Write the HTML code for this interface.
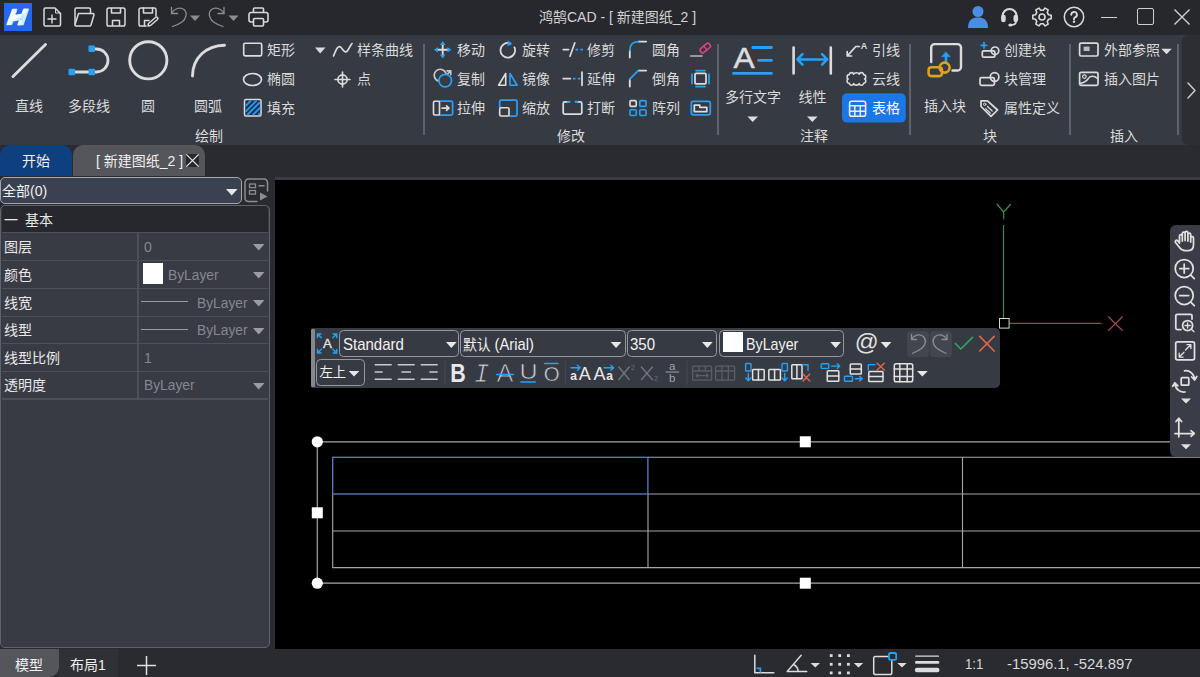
<!DOCTYPE html>
<html lang="zh">
<head>
<meta charset="utf-8">
<title>鸿鹄CAD</title>
<style>
*{box-sizing:border-box;margin:0;padding:0}
html,body{width:1200px;height:677px;overflow:hidden;background:#000}
body{position:relative;font-family:"Liberation Sans","Noto Sans CJK SC",sans-serif;font-size:14px;color:#e6e6e6}
.abs{position:absolute}
#titlebar{position:absolute;left:0;top:0;width:1200px;height:35px;background:#27282d}
#ribbon{position:absolute;left:0;top:35px;width:1200px;height:110px;background:#363a43}
#tabstrip{position:absolute;left:0;top:145px;width:1200px;height:35px;background:#2a2b30}
#left{position:absolute;left:0;top:176px;width:275px;height:473px;background:#2a2b30}
#canvas{position:absolute;left:275px;top:180px;width:925px;height:469px;background:#000}
#status{position:absolute;left:0;top:649px;width:1200px;height:28px;background:#2a2b30}
.t{position:absolute;white-space:nowrap;line-height:20px}
#ribbon .t{color:#dadada}
svg{position:absolute;overflow:visible}
.cb{border:1.5px solid #96989e;border-radius:4.500px;background:#363a43}
</style>
</head>
<body>
<div id="titlebar">
<!-- logo -->
<div class="abs" style="left:4px;top:3px;width:27.500px;height:27.700px;background:#2468f2"></div>
<svg style="left:0;top:0" width="36" height="35" viewBox="0 0 36 35"><defs><linearGradient id="lg" x1="0" y1="0" x2="1" y2="0.600"><stop offset="0" stop-color="#ffffff"/><stop offset="0.550" stop-color="#f4fbff"/><stop offset="1" stop-color="#a9daf8"/></linearGradient></defs><g fill="url(#lg)" stroke="url(#lg)" stroke-width="1.600" stroke-linejoin="round"><path d="M12.800 9.600 L16.600 9.600 L11.600 24.200 L7.200 24.400 Z"/><path d="M24 9.400 L28.200 9.200 L23 24.400 L18.200 24.600 Z"/><path d="M13.200 15.600 C17 15.800 19 14.400 23.600 14.400 L22 19.400 C18 19.400 16 20.600 11.600 20.400 Z"/></g></svg>
<!-- new -->
<svg style="left:43px;top:7px" width="19" height="20" viewBox="0 0 19 20" fill="none" stroke="#d9d9d9" stroke-width="1.5" stroke-linejoin="round" stroke-linecap="round"><path d="M2.5 1 H12 L17.5 6.5 V17.5 A1.5 1.5 0 0 1 16 19 H2.5 A1.5 1.5 0 0 1 1 17.5 V2.5 A1.5 1.5 0 0 1 2.5 1 Z"/><path d="M12.5 2 V6 H17" stroke-width="1"/><path d="M9 8 V16 M5 12 H13" stroke-width="1.400"/></svg>
<!-- open -->
<svg style="left:74px;top:7px" width="21" height="20" viewBox="0 0 21 20" fill="none" stroke="#d9d9d9" stroke-width="1.5" stroke-linejoin="round" stroke-linecap="round"><path d="M1 17 V2.5 A1.5 1.5 0 0 1 2.5 1 H15 A1.5 1.5 0 0 1 16.5 2.5 V6.5"/><path d="M4.5 6.5 H19 A1 1 0 0 1 20 7.8 L17 18 A1.5 1.5 0 0 1 15.5 19 H2 A1 1 0 0 1 1 17.7 Z"/></svg>
<!-- save -->
<svg style="left:106px;top:7px" width="20" height="20" viewBox="0 0 20 20" fill="none" stroke="#d9d9d9" stroke-width="1.5" stroke-linejoin="round"><rect x="1" y="1" width="18" height="18" rx="1.8"/><path d="M5.5 1 V6 H14.5 V1"/><path d="M6.5 19 V13.5 H13.5 V19"/></svg>
<!-- save as -->
<svg style="left:138px;top:7px" width="21" height="20" viewBox="0 0 21 20" fill="none" stroke="#d9d9d9" stroke-width="1.5" stroke-linejoin="round" stroke-linecap="round"><path d="M8 19 H2.8 A1.8 1.8 0 0 1 1 17.2 V2.8 A1.8 1.8 0 0 1 2.8 1 H16.2 A1.8 1.8 0 0 1 18 2.8 V9"/><path d="M5.5 1 V6 H14.5 V1"/><path d="M6.5 19 V13.5 H11"/><path d="M10.5 16.5 L17.5 10.5 A1.2 1.2 0 0 1 19.5 12.5 L12.5 18.5 L10 19 Z"/></svg>
<!-- undo -->
<svg style="left:169px;top:6px" width="34" height="22" viewBox="0 0 34 22" fill="none" stroke="#8c8d90" stroke-width="1.3" stroke-linejoin="round" stroke-linecap="round"><path d="M2.5 1.5 V7.5 H8.5"/><path d="M2.5 7.5 C5 2.5 11 0.5 15 3.5 C19 7 17 13 13 16 C10 18.2 6.5 19.5 3.5 20.5"/><path d="M21 9.5 H31 L26 15 Z" fill="#8c8d90" stroke="none"/></svg>
<!-- redo -->
<svg style="left:208px;top:6px" width="34" height="22" viewBox="0 0 34 22" fill="none" stroke="#8c8d90" stroke-width="1.3" stroke-linejoin="round" stroke-linecap="round"><path d="M16 1.5 V7.5 H10"/><path d="M16 7.5 C13.5 2.5 7.5 0.5 3.5 3.5 C-0.5 7 1.5 13 5.5 16 C8.5 18.2 12 19.5 15 20.5"/><path d="M20.5 9.5 H30.5 L25.5 15 Z" fill="#8c8d90" stroke="none"/></svg>
<!-- print -->
<svg style="left:248px;top:7px" width="21" height="20" viewBox="0 0 21 20" fill="none" stroke="#d9d9d9" stroke-width="1.6" stroke-linejoin="round"><path d="M5.5 5.5 V2 A1 1 0 0 1 6.5 1 H14.5 A1 1 0 0 1 15.5 2 V5.5"/><path d="M5.5 15 H3 A2 2 0 0 1 1 13 V7.5 A2 2 0 0 1 3 5.5 H18 A2 2 0 0 1 20 7.5 V13 A2 2 0 0 1 18 15 H15.5"/><rect x="5.5" y="11.5" width="10" height="7.5" rx="1"/></svg>
<div class="t" style="left:539px;top:7px;font-size:14px;color:#d4d4d4">鸿鹄CAD - [ 新建图纸_2 ]</div>
<!-- user -->
<svg style="left:967px;top:5px" width="22" height="23" viewBox="0 0 22 23"><circle cx="11" cy="6.5" r="5.5" fill="#4a8de4"/><path d="M1 23 C1 15 5 12.5 11 12.5 C17 12.5 21 15 21 23 Z" fill="#4a8de4"/></svg>
<!-- headset -->
<svg style="left:1000px;top:7px" width="19" height="20" viewBox="0 0 19 20" fill="none" stroke="#d9d9d9" stroke-width="2.100" stroke-linecap="round"><path d="M2.600 10.500 V9 A7 7 0 0 1 16.600 9 V10.500"/><rect x="1.100" y="7.800" width="4.600" height="7.400" rx="2.200" fill="#d9d9d9" stroke="none"/><rect x="13.500" y="7.800" width="4.600" height="7.400" rx="2.200" fill="#d9d9d9" stroke="none"/><path d="M16.200 14 C16.200 16.800 14 18 11 18" stroke-width="1.700"/><ellipse cx="10.400" cy="17.900" rx="2.100" ry="1.500" fill="#d9d9d9" stroke="none"/></svg>
<!-- gear -->
<svg style="left:1032.200px;top:6.900px" width="20" height="20" viewBox="0 0 20 20" fill="none" stroke="#d9d9d9" stroke-width="1.600" stroke-linejoin="round"><path d="M16.52 7.75 L19.23 8.21 L19.23 11.79 L16.52 12.25 L15.21 14.53 L16.17 17.09 L13.06 18.89 L11.32 16.77 L8.68 16.77 L6.94 18.89 L3.83 17.09 L4.79 14.53 L3.48 12.25 L0.77 11.79 L0.77 8.21 L3.48 7.75 L4.79 5.47 L3.83 2.91 L6.94 1.11 L8.68 3.23 L11.32 3.23 L13.06 1.11 L16.17 2.91 L15.21 5.47 Z"/><circle cx="10" cy="10" r="3"/></svg>
<!-- help -->
<svg style="left:1063px;top:6px" width="22" height="22" viewBox="0 0 22 22" fill="none" stroke="#d9d9d9" stroke-width="1.5" stroke-linecap="round"><circle cx="11" cy="11" r="9.7"/><path d="M8.300 8.800 A2.800 2.800 0 1 1 11.900 11.400 C11.200 11.700 11 12.200 11 13.200" stroke-width="1.900"/><circle cx="11" cy="15.800" r="1.200" fill="#d9d9d9" stroke="none"/></svg>
<!-- window controls -->
<div class="abs" style="left:1101px;top:16.700px;width:16px;height:1.300px;background:#d0d0d0"></div>
<div class="abs" style="left:1137px;top:8px;width:17px;height:17px;border:1.500px solid #d0d0d0;border-radius:2px"></div>
<svg style="left:1174px;top:9px" width="16" height="16" viewBox="0 0 17 17" stroke="#d0d0d0" stroke-width="1.450"><path d="M0.5 0.5 L16.5 16.5 M16.5 0.5 L0.5 16.5"/></svg>
</div>
<div id="ribbon">
<!-- ===== draw ===== -->
<svg style="left:0;top:0" width="420" height="110" viewBox="0 35 420 110" fill="none" stroke-linecap="round">
<path d="M13 76.5 L45.5 44.5" stroke="#dcdcdc" stroke-width="2.900"/>
<path d="M71.5 72 H96.5 A11.5 11.5 0 0 0 96.5 49 H92" stroke="#dcdcdc" stroke-width="2.800"/>
<rect x="88.5" y="45.5" width="6.5" height="6.5" rx="1" fill="#27a0f5"/><rect x="68.5" y="68.7" width="6.5" height="6.5" rx="1" fill="#27a0f5"/><rect x="88.5" y="68.7" width="6.5" height="6.5" rx="1" fill="#27a0f5"/>
<circle cx="148.300" cy="60.300" r="18.600" stroke="#dcdcdc" stroke-width="2.900"/>
<path d="M192.5 76 C192.5 58 206 45.5 224.5 45.200" stroke="#dcdcdc" stroke-width="2.900"/>
<!-- rect -->
<rect x="243.7" y="43.2" width="18" height="12.6" rx="1.5" stroke="#dcdcdc" stroke-width="1.65"/>
<ellipse cx="252.5" cy="79.5" rx="9" ry="6" stroke="#dcdcdc" stroke-width="1.65"/>
<rect x="244.5" y="99.5" width="16.5" height="16.5" rx="1.5" fill="#1c2f4a" stroke="#dcdcdc" stroke-width="1.5"/>
<path d="M245.6 106 L251 100.6 M245.6 111.6 L256.5 100.6 M247.2 115 L260 102.2 M252.8 115 L260 107.8 M258.2 115 L260 113.2" stroke="#2a96ea" stroke-width="2" stroke-linecap="butt"/>
<path d="M315 47.5 H325.5 L320.2 53.5 Z" fill="#dcdcdc"/>
<path d="M333.5 56 C336 50 338 44.5 341 47.5 C344 51 345.5 54 348 50 C349.5 47.5 350.5 45.5 352 43.5" stroke="#dcdcdc" stroke-width="1.65"/>
<circle cx="342.5" cy="79.5" r="4.6" stroke="#dcdcdc" stroke-width="1.65"/><path d="M335 79.5 H350 M342.5 72 V87" stroke="#dcdcdc" stroke-width="1.65"/>
</svg>
<div class="t" style="left:15px;top:61px">直线</div>
<div class="t" style="left:68px;top:61px">多段线</div>
<div class="t" style="left:141px;top:61px">圆</div>
<div class="t" style="left:194px;top:61px">圆弧</div>
<div class="t" style="left:267px;top:5px">矩形</div>
<div class="t" style="left:267px;top:34px">椭圆</div>
<div class="t" style="left:267px;top:63px">填充</div>
<div class="t" style="left:357px;top:5px">样条曲线</div>
<div class="t" style="left:357px;top:34px">点</div>
<div class="t" style="left:195px;top:91px">绘制</div>
<!-- ===== modify ===== -->
<div class="abs" style="left:423px;top:9px;width:1.500px;height:91px;background:#5f636d"></div>
<svg style="left:420px;top:0" width="300" height="110" viewBox="420 35 300 110" fill="none" stroke-linecap="round" stroke-linejoin="round">
<!-- move -->
<path d="M442.7 44.5 V55 M437.5 49.7 H448" stroke="#dcdcdc" stroke-width="1.85"/>
<path d="M442.7 41 L445.5 45 H439.9 Z M442.7 58.4 L445.5 54.4 H439.9 Z M433.9 49.7 L438 46.9 V52.5 Z M451.5 49.7 L447.4 46.9 V52.5 Z" fill="#27a0f5"/>
<!-- copy -->
<path d="M438.5 81 A6 6 0 1 1 446 73.5" stroke="#c8c8c8" stroke-width="1.65"/>
<path d="M447 70.8 H450.8 V74.6 M450.8 70.8 L447.5 74" stroke="#c8c8c8" stroke-width="1.65"/>
<circle cx="445.2" cy="80.6" r="6.3" stroke="#27a0f5" stroke-width="1.75"/>
<!-- stretch -->
<path d="M439.5 101.2 H451 A1.6 1.6 0 0 1 452.6 102.8 V113.4 A1.6 1.6 0 0 1 451 115 H439.5" stroke="#27a0f5" stroke-width="1.75"/>
<rect x="433.5" y="101.2" width="6" height="13.8" rx="1.2" stroke="#dcdcdc" stroke-width="1.65"/>
<path d="M442 108.1 H448.5 M446.5 105.8 L449 108.1 L446.5 110.4" stroke="#dcdcdc" stroke-width="1.65"/>
<!-- rotate -->
<path d="M513 45.2 A7.3 7.3 0 1 1 507.7 43" stroke="#dcdcdc" stroke-width="1.75" transform="rotate(20 507.7 50.3)" />
<path d="M507.5 40.5 L512.5 43.5 L508 46.5 Z" fill="#27a0f5" transform="rotate(8 509 43)"/>
<!-- mirror -->
<path d="M505.7 73.5 V85.2 H498.6 Z" stroke="#dcdcdc" stroke-width="1.65"/>
<path d="M510 73.5 V85.2 H517.1 Z" stroke="#27a0f5" stroke-width="1.65"/>
<!-- scale -->
<path d="M499.7 107 V101.6 A1.6 1.6 0 0 1 501.3 100 H515.4 A1.6 1.6 0 0 1 517 101.6 V114.4 A1.6 1.6 0 0 1 515.4 116 H509.5" stroke="#27a0f5" stroke-width="1.75"/>
<rect x="499.7" y="107.7" width="9.3" height="8.3" rx="1.2" stroke="#dcdcdc" stroke-width="1.65"/>
<!-- trim -->
<path d="M563.2 49.6 H568.6 M570 56.2 L574.8 42.9" stroke="#dcdcdc" stroke-width="1.65"/>
<path d="M575.5 49.6 H583" stroke="#27a0f5" stroke-width="1.65" stroke-dasharray="2.6 2.2" stroke-linecap="butt"/>
<!-- extend -->
<path d="M563.2 78.6 H570.5 M582 72 V85.3" stroke="#dcdcdc" stroke-width="1.75"/>
<path d="M573 78.6 H580.5" stroke="#27a0f5" stroke-width="1.65" stroke-dasharray="2.6 2.2" stroke-linecap="butt"/>
<!-- break -->
<path d="M568.5 101.8 H564.8 A1.6 1.6 0 0 0 563.2 103.4 V112.6 A1.6 1.6 0 0 0 564.8 114.2 H580.2 A1.6 1.6 0 0 0 581.8 112.6 V103.4 A1.6 1.6 0 0 0 580.2 101.8 H576.5" stroke="#dcdcdc" stroke-width="1.75"/>
<path d="M568 101.8 H569.6 M575.6 101.8 H577.2" stroke="#27a0f5" stroke-width="2.2"/>
<!-- fillet -->
<path d="M629.8 57.5 V50.5 M638.2 41.6 H646.2" stroke="#dcdcdc" stroke-width="1.85"/>
<path d="M629.8 50.3 C629.8 45 633 41.6 638.2 41.6" stroke="#27a0f5" stroke-width="1.85"/>
<!-- chamfer -->
<path d="M629.8 86.5 V79.2 M638.2 70.6 H646.2" stroke="#dcdcdc" stroke-width="1.85"/>
<path d="M629.8 79.2 L638.2 70.6" stroke="#27a0f5" stroke-width="1.85"/>
<!-- array -->
<rect x="630" y="100.6" width="6.2" height="5.8" rx="1" stroke="#dcdcdc" stroke-width="1.65"/>
<rect x="639.8" y="100.6" width="6.2" height="5.8" rx="1" stroke="#27a0f5" stroke-width="1.65"/>
<rect x="630" y="109.7" width="6.2" height="5.8" rx="1" stroke="#27a0f5" stroke-width="1.65"/>
<rect x="639.8" y="109.7" width="6.2" height="5.8" rx="1" stroke="#27a0f5" stroke-width="1.65"/>
<!-- erase -->
<path d="M690.8 56 H702" stroke="#b8b8b8" stroke-width="1.65"/>
<rect x="699.5" y="45.6" width="11.5" height="5" rx="1.5" stroke="#e0457b" stroke-width="1.55" transform="rotate(-40 705.2 48.1)"/>
<path d="M703.8 46.2 L707 50" stroke="#e0457b" stroke-width="1.2" transform="rotate(0)"/>
<!-- offset -->
<rect x="695" y="73.4" width="11" height="10.4" rx="1" stroke="#dcdcdc" stroke-width="1.75"/>
<path d="M692 74 V83.5 M709 74 V83.5 M696 70.5 H705 M696 86.7 H705" stroke="#27a0f5" stroke-width="1.75"/>
<!-- folder -->
<rect x="691.3" y="101.4" width="19" height="13.4" rx="2" stroke="#27a0f5" stroke-width="1.75"/>
<path d="M694.3 111.7 V105.2 H699.8 V107.3 H706.8 V111.7 Z" stroke="#dcdcdc" stroke-width="1.75"/>
</svg>
<div class="t" style="left:457px;top:5px">移动</div>
<div class="t" style="left:457px;top:34px">复制</div>
<div class="t" style="left:457px;top:63px">拉伸</div>
<div class="t" style="left:522px;top:5px">旋转</div>
<div class="t" style="left:522px;top:34px">镜像</div>
<div class="t" style="left:522px;top:63px">缩放</div>
<div class="t" style="left:587px;top:5px">修剪</div>
<div class="t" style="left:587px;top:34px">延伸</div>
<div class="t" style="left:587px;top:63px">打断</div>
<div class="t" style="left:652px;top:5px">圆角</div>
<div class="t" style="left:652px;top:34px">倒角</div>
<div class="t" style="left:652px;top:63px">阵列</div>
<div class="t" style="left:557px;top:91px">修改</div>
<div class="abs" style="left:717px;top:9px;width:1.500px;height:91px;background:#5f636d"></div>
<!-- ===== annotate ===== -->
<svg style="left:720px;top:0" width="480" height="110" viewBox="720 35 480 110" fill="none" stroke-linecap="round" stroke-linejoin="round">
<!-- mtext -->
<text x="733.6" y="68.4" font-family="Liberation Sans, sans-serif" font-size="29" fill="#dcdcdc" stroke="#dcdcdc" stroke-width="0.5" textLength="21.2" lengthAdjust="spacingAndGlyphs">A</text>
<path d="M752.8 47.5 H771.5 M758.5 60.4 H771.5 M733.5 73.4 H771.5" stroke="#27a0f5" stroke-width="2.8"/>
<!-- linear -->
<path d="M793.6 47.5 V73.5 M830.8 47.5 V73.5" stroke="#dcdcdc" stroke-width="2.6"/>
<path d="M797.5 59.4 H827 M802.5 54.200 L797.3 59.4 L802.5 64.600 M822 54.200 L827.2 59.4 L822 64.600" stroke="#27a0f5" stroke-width="2.500"/>
<path d="M747.5 116.5 H758 L752.7 122 Z M807 116.5 H817.6 L812.3 122 Z" fill="#dcdcdc"/>
<!-- leader -->
<path d="M847.6 55.6 L855.8 46.5 H859.3 M847.2 51.6 V56 H851.6" stroke="#dcdcdc" stroke-width="1.7"/>
<text x="860.8" y="49.2" font-family="Liberation Sans, sans-serif" font-weight="bold" font-size="9" fill="#dcdcdc">A</text>
<!-- cloud -->
<path d="M849.2 74.6 C849.5 72 853.2 72 853.6 74.2 C854.6 72.2 858.4 72.2 859.2 74.2 C859.8 72 863.4 72 863.6 74.6 C866.3 74.6 866.3 78.6 864.6 79 C866.3 79.4 866.3 83.2 863.6 83.2 C863.4 85.8 859.8 85.8 859.2 83.6 C858.4 85.6 854.6 85.6 853.6 83.6 C853.2 85.8 849.500 85.8 849.2 83.2 C846.500 83.2 846.500 79.4 848.2 79 C846.500 78.6 846.500 74.600 849.2 74.600 Z" stroke="#dcdcdc" stroke-width="1.6"/>
<!-- table btn -->
<rect x="842" y="93.2" width="63.8" height="29.4" rx="5" fill="#1b76e6"/>
<rect x="849.6" y="101.2" width="16" height="15" rx="2" stroke="#ececec" stroke-width="1.6"/>
<path d="M849.6 105.800 H865.6 M849.6 111.2 H865.6 M854.800 105.800 V116.200 M860.3 105.800 V116.200" stroke="#ececec" stroke-width="1.5"/>
<!-- insert block -->
<path d="M931.2 62 V47.600 A3.500 3.500 0 0 1 934.700 44.100 H957.500 A3.500 3.500 0 0 1 961 47.600 V67 A3.500 3.500 0 0 1 957.500 70.500 H952.500" stroke="#dcdcdc" stroke-width="2.400"/>
<path d="M946 61.500 V55" stroke="#27a0f5" stroke-width="2.600"/><path d="M946 52 L950.200 56.800 H941.800 Z" fill="#27a0f5" stroke="#27a0f5" stroke-width="0.6"/>
<rect x="928.600" y="67.300" width="13.400" height="8.800" rx="2.800" stroke="#dba21c" stroke-width="2.600"/>
<circle cx="944.600" cy="67.600" r="5" stroke="#dba21c" stroke-width="2.600"/>
<!-- create block -->
<path d="M984 42.6 V48 M981.3 45.3 H986.7" stroke="#27a0f5" stroke-width="1.700"/>
<rect x="982.300" y="50.800" width="12.600" height="6.400" rx="1.500" stroke="#dcdcdc" stroke-width="1.700"/>
<circle cx="995" cy="50.800" r="3.800" stroke="#dcdcdc" stroke-width="1.700"/>
<!-- block mgr -->
<rect x="980" y="77.600" width="14.400" height="7.800" rx="1.600" stroke="#dcdcdc" stroke-width="1.700"/>
<circle cx="994.600" cy="77" r="4.300" stroke="#dcdcdc" stroke-width="1.700"/>
<!-- attr def -->
<path d="M981 100.8 H987.5 L997.6 110 L991 116.4 L981 106.5 Z" stroke="#dcdcdc" stroke-width="1.700"/>
<circle cx="984.7" cy="104.3" r="1.2" stroke="#dcdcdc" stroke-width="1"/>
<path d="M987.5 106.5 L992.2 111 M985.6 108.6 L990.2 113" stroke="#dcdcdc" stroke-width="1.2"/>
<!-- xref -->
<rect x="1079.6" y="43.2" width="18.4" height="12.8" rx="1.5" stroke="#dcdcdc" stroke-width="1.700"/>
<rect x="1083.6" y="46.6" width="6" height="4.4" fill="#b9bbbf"/>
<path d="M1161.3 48.8 H1171.8 L1166.5 54.3 Z" fill="#dcdcdc"/>
<!-- image -->
<rect x="1079.6" y="72.3" width="18.4" height="13" rx="1.5" stroke="#dcdcdc" stroke-width="1.700"/>
<circle cx="1084.4" cy="76.6" r="1.8" stroke="#dcdcdc" stroke-width="1.2"/>
<path d="M1080 83.5 C1084 82.5 1086 82 1088 79 C1090 75.5 1094 75.5 1097.5 78.5" stroke="#dcdcdc" stroke-width="1.500"/>
</svg>
<div class="t" style="left:725px;top:52px">多行文字</div>
<div class="t" style="left:798.500px;top:52px">线性</div>
<div class="t" style="left:800px;top:91px">注释</div>
<div class="t" style="left:872px;top:5px">引线</div>
<div class="t" style="left:872px;top:34px">云线</div>
<div class="t" style="left:872px;top:63px;color:#fff">表格</div>
<div class="abs" style="left:909px;top:9px;width:1.500px;height:91px;background:#5f636d"></div>
<div class="t" style="left:924px;top:61px">插入块</div>
<div class="t" style="left:1004px;top:5px">创建块</div>
<div class="t" style="left:1004px;top:34px">块管理</div>
<div class="t" style="left:1004px;top:63px">属性定义</div>
<div class="t" style="left:983px;top:91px">块</div>
<div class="abs" style="left:1069px;top:9px;width:1.500px;height:91px;background:#5f636d"></div>
<div class="t" style="left:1104px;top:5px">外部参照</div>
<div class="t" style="left:1104px;top:34px">插入图片</div>
<div class="t" style="left:1110px;top:91px">插入</div>
<div class="abs" style="left:1177px;top:9px;width:1.500px;height:91px;background:#5f636d"></div>
<div class="abs" style="left:1182px;top:0;width:18px;height:110px;background:#2c2e34;border-top-left-radius:6px;border-bottom-left-radius:6px"></div>
<svg style="left:1187px;top:47px" width="9" height="17" viewBox="0 0 9 17" fill="none" stroke="#d0d0d0" stroke-width="1.4" stroke-linecap="round" stroke-linejoin="round"><path d="M1 1 L8 8.5 L1 16"/></svg>

</div>
<div id="tabstrip">
<div class="abs" style="left:0;top:0;width:72px;height:31px;background:#0e3f7e;border-radius:10px 10px 0 0"></div>
<div class="t" style="left:22px;top:6px;color:#f0f0f0">开始</div>
<div class="abs" style="left:73px;top:0;width:132px;height:31px;background:#54565c;border-radius:10px 10px 0 0"></div>
<div class="t" style="left:96px;top:6px;color:#f0f0f0">[ 新建图纸_2 ]</div>
<svg style="left:186.200px;top:9.100px" width="13" height="13" viewBox="0 0 13 13" fill="none" stroke="#ececec" stroke-width="1.200"><rect x="0" y="0" width="13" height="13" fill="#27282d" stroke="none"/><path d="M0.300 0.300 L12.700 12.700 M12.700 0.300 L0.300 12.700"/></svg>
<div class="abs" style="left:275px;top:32px;width:925px;height:3px;background:#3a3c42"></div>
</div>
<div id="left">
<div class="abs" style="left:0;top:1px;width:242px;height:27px;background:#3a4252;border:1.5px solid #a3a5ab;border-radius:5px"></div>
<div class="t" style="left:2px;top:5px;color:#f0f0f0">全部(0)</div>
<svg style="left:226px;top:13px" width="12" height="7" viewBox="0 0 12 7"><path d="M0 0 H11.5 L5.75 6.5 Z" fill="#e8e8e8"/></svg>
<svg style="left:244px;top:2px" width="25" height="25" viewBox="0 0 25 25" fill="none" stroke="#8b8d93" stroke-width="1.5" stroke-linecap="round"><path d="M13 23.5 H4.5 A3.5 3.5 0 0 1 1 20 V4.500 A3.5 3.5 0 0 1 4.500 1 H20 A3.5 3.5 0 0 1 23.5 4.500 V13"/><rect x="5.5" y="6" width="6" height="3.6" stroke-width="1.3"/><rect x="5.500" y="12.5" width="6" height="3.6" stroke-width="1.3"/><path d="M15 7.800 H20"/><path d="M16 14.500 L23.500 18.500 L16 22.500 Z" fill="#8b8d93" stroke="none"/></svg>
<div class="abs" style="left:0;top:28.500px;width:269.500px;height:443.500px;background:#383b44;border:1.5px solid #60636c;border-radius:5px"></div>
<div class="abs" style="left:1.5px;top:30px;width:266.500px;height:26.500px;background:#27282d;border-radius:4px 4px 0 0"></div>
<div class="t" style="left:4px;top:34px;color:#e8e8e8">一</div><div class="t" style="left:25px;top:34px;color:#e8e8e8">基本</div>
<div class="abs" style="left:1.5px;top:56px;width:266.5px;height:28px;border-top:1.5px solid #4d5059"></div>
<div class="t" style="left:4px;top:60.5px;color:#e8e8e8">图层</div>
<div class="abs" style="left:1.5px;top:84px;width:266.5px;height:28px;border-top:1.5px solid #4d5059"></div>
<div class="t" style="left:4px;top:88.5px;color:#e8e8e8">颜色</div>
<div class="abs" style="left:1.5px;top:112px;width:266.5px;height:27.5px;border-top:1.5px solid #4d5059"></div>
<div class="t" style="left:4px;top:116.5px;color:#e8e8e8">线宽</div>
<div class="abs" style="left:1.5px;top:139.5px;width:266.5px;height:27.5px;border-top:1.5px solid #4d5059"></div>
<div class="t" style="left:4px;top:144.0px;color:#e8e8e8">线型</div>
<div class="abs" style="left:1.5px;top:167px;width:266.5px;height:27.5px;border-top:1.5px solid #4d5059"></div>
<div class="t" style="left:4px;top:171.5px;color:#e8e8e8">线型比例</div>
<div class="abs" style="left:1.5px;top:194.5px;width:266.5px;height:27.5px;border-top:1.5px solid #4d5059"></div>
<div class="t" style="left:4px;top:199.0px;color:#e8e8e8">透明度</div>
<div class="abs" style="left:1.5px;top:222px;width:266.5px;height:1.5px;background:#4d5059"></div>
<div class="abs" style="left:137px;top:56px;width:1.5px;height:167px;background:#4d5059"></div>
<div class="t" style="left:144px;top:60.5px;color:#85878d">0</div>
<svg style="left:253px;top:68px" width="12" height="7" viewBox="0 0 12 7"><path d="M0 0 H11.5 L5.75 6.5 Z" fill="#9a9ca2"/></svg>
<div class="abs" style="left:143px;top:87px;width:20px;height:21px;background:#fff"></div><div class="t" style="left:168px;top:88.5px;color:#85878d;font-size:15.300px;transform:scaleX(0.900);transform-origin:0 50%">ByLayer</div>
<svg style="left:253px;top:96px" width="12" height="7" viewBox="0 0 12 7"><path d="M0 0 H11.5 L5.75 6.5 Z" fill="#9a9ca2"/></svg>
<div class="abs" style="left:141px;top:125px;width:47px;height:1.3px;background:#9a9ca2"></div><div class="t" style="left:197px;top:116.5px;color:#85878d;font-size:15.300px;transform:scaleX(0.900);transform-origin:0 50%">ByLayer</div>
<svg style="left:253px;top:124px" width="12" height="7" viewBox="0 0 12 7"><path d="M0 0 H11.5 L5.75 6.5 Z" fill="#9a9ca2"/></svg>
<div class="abs" style="left:141px;top:152.5px;width:47px;height:1.3px;background:#9a9ca2"></div><div class="t" style="left:197px;top:144.0px;color:#85878d;font-size:15.300px;transform:scaleX(0.900);transform-origin:0 50%">ByLayer</div>
<svg style="left:253px;top:151.5px" width="12" height="7" viewBox="0 0 12 7"><path d="M0 0 H11.5 L5.75 6.5 Z" fill="#9a9ca2"/></svg>
<div class="t" style="left:144px;top:171.5px;color:#85878d">1</div>
<div class="t" style="left:144px;top:199.0px;color:#85878d;font-size:15.300px;transform:scaleX(0.900);transform-origin:0 50%">ByLayer</div>
<svg style="left:253px;top:206.5px" width="12" height="7" viewBox="0 0 12 7"><path d="M0 0 H11.5 L5.75 6.5 Z" fill="#9a9ca2"/></svg>

</div>
<div id="canvas">
<svg style="left:0;top:0" width="925" height="469" viewBox="275 180 925 469" fill="none">
<!-- UCS -->
<path d="M1003.5 225 V318" stroke="#3f8c48" stroke-width="1.2"/>
<path d="M996.8 204 L1003.7 212 L1010.8 204 M1003.7 212 V219.300" stroke="#3f8c48" stroke-width="1.2"/>
<path d="M1009.5 323.300 H1101.500" stroke="#9a4a4a" stroke-width="1.2"/>
<path d="M1108.2 316.500 L1122.700 330.700 M1122.700 316.500 L1108.200 330.700" stroke="#9a4a4a" stroke-width="1.2"/>
<rect x="999.5" y="318.500" width="9.6" height="9.6" stroke="#d8d8d8" stroke-width="1"/>
<!-- table frame -->
<path d="M317.300 441.800 H1200 M317.300 583.200 H1200 M317.300 441.800 V583.200" stroke="#a6a6a6" stroke-width="1.2"/>
<path d="M332.700 494 V567.600 H1200 M332.700 531 H1200 M648 494 H1200 M962.500 457.300 V567.600 M648 494 V567.600 M648 457.300 H1200" stroke="#a6a6a6" stroke-width="1.1"/>
<rect x="332.700" y="457.300" width="315.200" height="36.700" stroke="#5a7fc4" stroke-width="1.3"/>
<circle cx="317.300" cy="441.800" r="5.600" fill="#fff"/><circle cx="317.300" cy="583.200" r="5.600" fill="#fff"/>
<rect x="311.800" y="507.300" width="11" height="11" fill="#fff"/>
<rect x="799.800" y="436.300" width="11" height="11" fill="#fff"/>
<rect x="799.800" y="577.700" width="11" height="11" fill="#fff"/>
</svg>
<div class="abs" style="left:36px;top:148px;width:688.500px;height:59.500px;background:#363a43;border-radius:2px 5px 5px 2px"></div>
<div class="abs" style="left:36px;top:148.500px;width:3.500px;height:58px;background:#85878c;border-radius:1px"></div>
<div class="abs cb" style="left:64.300px;top:150.200px;width:120px;height:27px"></div>
<div class="abs cb" style="left:185.300px;top:150.200px;width:165.700px;height:27px"></div>
<div class="abs cb" style="left:352px;top:150.200px;width:90.300px;height:27px"></div>
<div class="abs cb" style="left:444.300px;top:150.200px;width:125px;height:27px"></div>
<div class="abs cb" style="left:41.200px;top:179.200px;width:48.800px;height:27px"></div>
<div class="t" style="left:68px;top:154.500px;font-size:15.700px;color:#f2f2f2;transform:scaleX(0.956);transform-origin:0 50%">Standard</div>
<div class="t" style="left:187.500px;top:154.500px;font-size:15.700px;color:#f2f2f2;transform:scaleX(0.940);transform-origin:0 50%"><span style="font-size:14.650px">默认</span> (Arial)</div>
<div class="t" style="left:355px;top:154.500px;font-size:15.700px;color:#f2f2f2;transform:scaleX(0.956);transform-origin:0 50%">350</div>
<div class="abs" style="left:447.500px;top:152.300px;width:20px;height:19.700px;background:#fff"></div>
<div class="t" style="left:471px;top:154.500px;font-size:15.700px;color:#f2f2f2;transform:scaleX(0.909);transform-origin:0 50%">ByLayer</div>
<div class="t" style="left:44.500px;top:183px;font-size:13.500px;color:#f2f2f2;letter-spacing:-0.5px">左上</div>
<div class="abs" style="left:631.500px;top:150.500px;width:22.500px;height:26.500px;background:#43464e;border-radius:4px"></div>
<div class="abs" style="left:654.500px;top:150.500px;width:22.500px;height:26.500px;background:#43464e;border-radius:4px"></div>
<svg style="left:36px;top:148px" width="689" height="59" viewBox="311 328 689 59" fill="none" stroke-linecap="round" stroke-linejoin="round">
<g fill="#e8e8e8"><path d="M446 342 H456.700 L451.350 348 Z"/><path d="M610.700 342 H621.400 L616.050 348 Z"/><path d="M702 342 H712.700 L707.350 348 Z"/><path d="M830.300 342 H841 L835.650 348 Z"/><path d="M880.700 342 H891.400 L886.050 348 Z"/><path d="M348.700 371 H359.400 L354.050 376.500 Z"/><path d="M917 371 H927.700 L922.350 376.500 Z"/></g>
<!-- text fit icon -->
<g stroke="#27a0f5" stroke-width="1.500"><path d="M317.500 337.500 V334 H321 M317.800 334.300 L321.300 337.800"/><path d="M336.700 337.500 V334 H333.200 M336.400 334.300 L332.900 337.800"/><path d="M317.500 349.500 V353 H321 M317.800 352.700 L321.300 349.200"/><path d="M336.700 349.500 V353 H333.200 M336.400 352.700 L332.900 349.200"/></g>
<text x="327.400" y="347.800" font-family="Liberation Sans, sans-serif" font-size="13.300" fill="#e8e8e8" stroke="#e8e8e8" stroke-width="0.300" text-anchor="middle">A</text>
<!-- align icons -->
<g stroke="#c9c9c9" stroke-width="1.500" stroke-linecap="butt"><path d="M374.700 364.700 H391.700 M374.700 372 H382.700 M374.700 379.200 H391.700"/><path d="M397.700 364.700 H414.700 M401.400 372 H411 M397.700 379.200 H414.700"/><path d="M420.700 364.700 H437.700 M429.400 372 H437.700 M420.700 379.200 H437.700"/></g>
<path d="M445 361 V385 M565.300 361 V385 M687 361 V385" stroke="#464952" stroke-width="1"/>
<!-- BIUO -->
<text x="450.300" y="381.700" font-family="Liberation Sans, sans-serif" font-weight="bold" font-size="25.500" fill="#e8e8e8" textLength="15.500" lengthAdjust="spacingAndGlyphs">B</text>
<text x="0" y="0" font-family="Liberation Mono, monospace" font-style="italic" font-size="27.500" fill="#d4d4d4" stroke="#363a43" stroke-width="0.900" id="ital" transform="translate(473.700 381.800) scale(0.950 1)">I</text>
<text x="496.500" y="382" font-family="Liberation Sans, sans-serif" font-size="25.500" fill="#d4d4d4" stroke="#363a43" stroke-width="0.900" textLength="17" lengthAdjust="spacingAndGlyphs" id="astrike">A</text>
<path d="M496.700 374.600 H513.400" stroke="#27a0f5" stroke-width="1.500"/>
<text x="0" y="0" font-family="Liberation Sans, sans-serif" font-size="21.800" fill="#d4d4d4" stroke="#363a43" stroke-width="0.600" id="uu" transform="translate(519.500 378.600) scale(1.150 1)">U</text>
<path d="M521 382 H535.300" stroke="#27a0f5" stroke-width="1.500"/>
<text x="0" y="0" font-family="Liberation Sans, sans-serif" font-size="20.800" fill="#d4d4d4" stroke="#363a43" stroke-width="0.500" id="oo" transform="translate(543.800 381.200) scale(0.985 1)">O</text>
<path d="M544.500 363.500 H558" stroke="#27a0f5" stroke-width="1.500"/>
<!-- case icons -->
<g stroke="#27a0f5" stroke-width="1.400"><path d="M571 367.700 H580 M577.300 365.200 L580.200 367.700 L577.300 370.200"/><path d="M604 367.700 H613.500 M610.800 365.200 L613.700 367.700 L610.800 370.200"/></g>
<text x="570.300" y="379.800" font-family="Liberation Sans, sans-serif" font-weight="bold" font-size="12" fill="#e8e8e8">a</text>
<text x="578.800" y="379.800" font-family="Liberation Sans, sans-serif" font-size="18" fill="#e8e8e8">A</text>
<text x="593.500" y="379.800" font-family="Liberation Sans, sans-serif" font-size="18" fill="#e8e8e8">A</text>
<text x="606.200" y="379.800" font-family="Liberation Sans, sans-serif" font-weight="bold" font-size="12" fill="#e8e8e8">a</text>
<!-- super/sub -->
<g stroke="#74777e" stroke-width="1.400"><path d="M618.800 367 L629.200 379.600 M629.200 367 L618.800 379.600"/><path d="M641.400 367 L652.400 379.600 M652.400 367 L641.400 379.600"/></g>
<text x="631" y="369.800" font-family="Liberation Sans, sans-serif" font-size="7" fill="#6b6e75">2</text>
<text x="654" y="380.800" font-family="Liberation Sans, sans-serif" font-size="7" fill="#6b6e75">2</text>
<text x="672.300" y="369.800" font-family="Liberation Sans, sans-serif" font-size="11.500" fill="#a0a2a8" text-anchor="middle">a</text>
<text x="672.300" y="382" font-family="Liberation Sans, sans-serif" font-size="11.500" fill="#a0a2a8" text-anchor="middle">b</text>
<path d="M666 372 H678.700" stroke="#a0a2a8" stroke-width="1.200"/>
<!-- merge icons (disabled) -->
<g stroke="#5b5e66" stroke-width="1.300"><rect x="692.600" y="366.200" width="19" height="14" rx="1"/><path d="M692.600 371 H711.600 M699 366.200 V371 M705.300 366.200 V371 M696 375.700 H708.300 M697.800 374 L696 375.700 L697.800 377.400 M706.500 374 L708.300 375.700 L706.500 377.400"/>
<rect x="715.600" y="366.200" width="19" height="14" rx="1"/><path d="M715.600 371 H734.600 M722 366.200 V380.200 M728.300 366.200 V380.200"/></g>
<!-- insert col left -->
<g stroke="#27a0f5" stroke-width="1.400"><rect x="745.600" y="363.500" width="5.400" height="7.500" rx="0.800"/><path d="M748.300 373.500 V380.500 M745.800 378 L748.300 380.700 L750.800 378"/>
<rect x="782" y="363.500" width="5.400" height="7.500" rx="0.800"/><path d="M784.700 373.500 V380.500 M782.200 378 L784.700 380.700 L787.200 378"/></g>
<g stroke="#e2e2e2" stroke-width="1.500"><rect x="752.600" y="369.500" width="11.600" height="10.500" rx="0.800"/><path d="M758.400 369.500 V380"/><rect x="768.800" y="369.500" width="11.600" height="10.500" rx="0.800"/><path d="M774.600 369.500 V380"/>
<rect x="791.800" y="364.800" width="10.200" height="14" rx="0.800"/><path d="M796.900 364.800 V378.800"/></g>
<path d="M802.500 364.800 H808 V370.500" stroke="#27a0f5" stroke-width="1.400"/>
<path d="M803 374 L809.800 381 M809.800 374 L803 381" stroke="#e0664a" stroke-width="1.400"/>
<!-- insert row above -->
<g stroke="#27a0f5" stroke-width="1.400"><rect x="821.200" y="363.800" width="7.600" height="4.600" rx="0.800"/><path d="M831.500 366.100 H839.500 M837.200 363.800 L839.700 366.100 L837.200 368.400"/>
<rect x="844.500" y="376.300" width="8" height="5" rx="0.800"/><path d="M855.300 378.800 H862 M859.700 376.500 L862.200 378.800 L859.700 381.100"/></g>
<g stroke="#e2e2e2" stroke-width="1.500"><rect x="827.300" y="370.800" width="11.500" height="10.500" rx="0.800"/><path d="M827.300 376 H838.800"/>
<rect x="850.300" y="364" width="11" height="10" rx="0.800"/><path d="M850.300 369 H861.300"/>
<rect x="868.800" y="371.500" width="14.200" height="10" rx="0.800"/><path d="M868.800 376.500 H883"/></g>
<path d="M875 364.600 H868.300 V370" stroke="#27a0f5" stroke-width="1.400"/>
<path d="M877 363.200 L884.300 370 M884.300 363.200 L877 370" stroke="#e0664a" stroke-width="1.400"/>
<!-- grid -->
<g stroke="#e2e2e2" stroke-width="1.500"><rect x="894.300" y="363.700" width="18.400" height="18" rx="1.800"/><path d="M894.300 369 H912.700 M894.300 376.500 H912.700 M899.800 363.700 V381.700 M907.200 363.700 V381.700"/></g>
<!-- @ -->
<text x="854.800" y="349.800" font-family="Liberation Sans, sans-serif" font-size="23.600" fill="#e0e0e0" id="at">@</text>
<!-- undo/redo -->
<g stroke="#8a8d93" stroke-width="1.300"><path d="M911.500 334.500 V339.500 H916.500"/><path d="M911.700 339.300 C914 335 919.500 333.500 923.300 336.500 C927 340 925.500 345 922 348 C919 350.500 915.500 352 912.500 353.300"/>
<path d="M947 334.500 V339.500 H942"/><path d="M946.800 339.300 C944.500 335 939 333.500 935.200 336.500 C931.500 340 933 345 936.500 348 C939.500 350.500 943 352 946 353.300"/></g>
<path d="M955.300 343.500 L960.800 349 L972.500 337.300" stroke="#2fa55a" stroke-width="1.700"/>
<path d="M979.700 336.300 L994.200 351 M994.200 336.300 L979.700 351" stroke="#e0664a" stroke-width="1.700"/>
</svg>

<div class="abs" style="left:895px;top:45.300px;width:30px;height:232px;background:#3a3d47;border-radius:6px 0 0 6px"></div>
<svg style="left:895px;top:45px" width="30" height="233" viewBox="1170 225 30 233" fill="none" stroke="#e0e0e0" stroke-width="1.750" stroke-linecap="round" stroke-linejoin="round">
<!-- hand -->
<path d="M1179.500 243 V236 A1.400 1.400 0 0 1 1182.300 236 V241 M1182.300 240.500 V233.500 A1.400 1.400 0 0 1 1185.100 233.500 V240.500 M1185.100 240.500 V232.800 A1.400 1.400 0 0 1 1187.900 232.800 V240.500 M1187.900 241 V234.500 A1.400 1.400 0 0 1 1190.700 234.500 V241 M1190.700 242 V238 A1.400 1.400 0 0 1 1193.500 238 V244.500 C1193.500 248.500 1191.500 250.500 1188.500 250.500 H1185 C1182.500 250.500 1181 249.500 1179.500 247.500 L1175.500 242.500 C1174.500 241 1176.300 239.500 1177.600 240.700 L1179.500 243"/>
<!-- zoom in -->
<circle cx="1184.200" cy="268.500" r="9"/><path d="M1191 275.300 L1194.300 278.600 M1179.700 268.500 H1188.700 M1184.200 264 V273"/>
<circle cx="1184.200" cy="295.600" r="9"/><path d="M1191 302.400 L1194.300 305.700 M1179.700 295.600 H1188.700"/>
<!-- zoom window -->
<path d="M1181 329.500 H1177.300 A1.500 1.500 0 0 1 1175.800 328 V315.800 A1.500 1.500 0 0 1 1177.300 314.300 H1190.500 A1.500 1.500 0 0 1 1192 315.800 V319"/>
<circle cx="1187.600" cy="325.500" r="5"/><path d="M1191.400 329.300 L1194 331.800 M1185 325.500 H1190.200 M1187.600 322.900 V328.100" stroke-width="1.300"/>
<!-- fullscreen -->
<rect x="1175.700" y="341.800" width="18.800" height="18" rx="1.800"/>
<path d="M1185.500 350 L1190.600 345 M1187 344.700 H1190.900 V348.600 M1184 352.300 L1179.500 356.800 M1179.200 353.200 V357.100 H1183.100" stroke-width="1.300"/>
<!-- orbit -->
<rect x="1181.200" y="377.600" width="7.600" height="7.600" rx="1"/>
<path d="M1184.500 370.800 C1189.500 370 1194 373.500 1194.600 379.500 M1191.700 377 L1194.600 380 L1196.800 376.500"/>
<path d="M1185 392 C1180 392.800 1175.500 389.300 1174.900 383.300 M1177.800 385.800 L1174.900 382.800 L1172.700 386.300"/>
<path d="M1181 398.600 H1191 L1186 403.600 Z M1181 444.200 H1191 L1186 449.200 Z" fill="#e0e0e0" stroke="none"/>
<!-- axes -->
<path d="M1178.800 418.500 V436.800 M1175 433.500 H1193.800 M1176 421.500 L1178.800 418.200 L1181.600 421.500 M1191 430.700 L1194.300 433.500 L1191 436.300"/>
</svg>
</div>
<div id="status">
<div class="abs" style="left:0;top:0;width:59px;height:28px;background:#54565c;border-radius:0 0 10px 0"></div>
<div class="t" style="left:15px;top:6.300px;color:#f0f0f0">模型</div>
<div class="abs" style="left:59px;top:0;width:59px;height:28px;background:#303137"></div>
<div class="t" style="left:70px;top:6.300px;color:#f0f0f0">布局1</div>
<svg style="left:137px;top:7px" width="19" height="19" viewBox="0 0 19 19" stroke="#e0e0e0" stroke-width="1.5"><path d="M9.5 0 V19 M0 9.5 H19"/></svg>
<svg style="left:740px;top:0" width="220" height="28" viewBox="740 649 220 28" fill="none" stroke="#dcdcdc" stroke-width="1.500" stroke-linecap="round" stroke-linejoin="round">
<path d="M754.800 655.200 V672.800 H773.800"/>
<path d="M757.300 668.400 H760.400 V671.800" stroke="#27a0f5" stroke-width="1.700"/>
<path d="M801.200 655.300 L787.200 671.500 H806.800 M793.500 664.500 C796.500 666 798 668.500 798.200 671.300" stroke-width="1.400"/>
<g fill="#dcdcdc" stroke="none"><path d="M810.600 663 H820 L815.300 667.600 Z M853.800 663 H863.200 L858.500 667.600 Z M897.300 663 H906.700 L902 667.600 Z"/>
<rect x="829.800" y="654.200" width="2.800" height="2.800"/><rect x="838.300" y="654.200" width="2.800" height="2.800"/><rect x="847" y="654.200" width="2.800" height="2.800"/>
<rect x="829.800" y="662.900" width="2.800" height="2.800"/><rect x="838.300" y="662.900" width="2.800" height="2.800"/><rect x="847" y="662.900" width="2.800" height="2.800"/>
<rect x="829.800" y="671.500" width="2.800" height="2.800"/><rect x="838.300" y="671.500" width="2.800" height="2.800"/><rect x="847" y="671.500" width="2.800" height="2.800"/></g>
<path d="M888 656.500 H875.500 A1.800 1.800 0 0 0 873.700 658.300 V672.700 A1.800 1.800 0 0 0 875.500 674.500 H890 A1.800 1.800 0 0 0 891.800 672.700 V660.500"/>
<rect x="889" y="653" width="7.200" height="6.800" rx="1.600" stroke="#27a0f5" stroke-width="1.800"/>
<path d="M915.800 656.200 H938.500" stroke-width="1.200"/><path d="M916.300 662.400 H938" stroke-width="2.600"/><path d="M917 670 H937.300" stroke-width="4.400"/>
</svg>
<div class="t" style="left:964.500px;top:4.800px;font-size:15.500px;color:#d8d8d8;transform:scaleX(0.850);transform-origin:0 50%">1:1</div>
<div class="t" style="left:1007px;top:4.800px;font-size:15.500px;color:#d8d8d8;transform:scaleX(0.958);transform-origin:0 50%">-15996.1, -524.897</div>
</div>
</body>
</html>
